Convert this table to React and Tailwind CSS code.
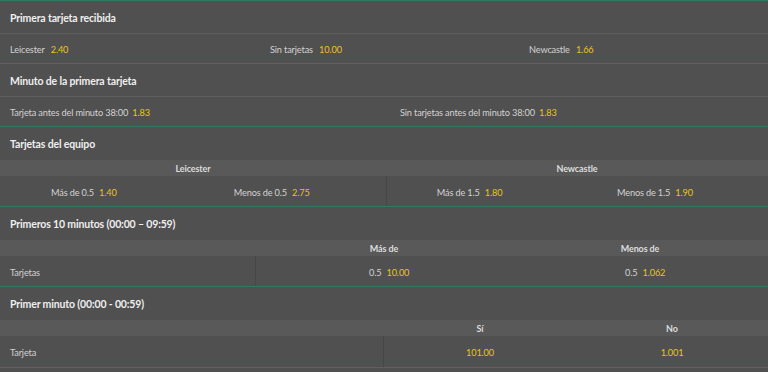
import React from 'react';

const font = "font-['Lato',_'Open_Sans',_sans-serif]";

const Odd = ({ children }) => <span className="text-[#e9c41f]">{children}</span>;

const Header = ({ title, tall }) => (
  <div className={`flex items-center px-[10px] pt-[2px] text-[10.5px] font-bold text-[#eeeeee] ${tall ? 'h-[33px]' : 'h-[32px]'}`}>
    {title}
  </div>
);

const Section = ({ children, last }) => (
  <div className={`border-t border-[#2f7a5c] ${last ? 'border-b' : ''}`}>{children}</div>
);

const SubHeader = ({ children }) => (
  <div className="flex h-[16px] items-center bg-[#595959] pt-[1px] text-[9px] font-bold tracking-[-0.1px] text-[#dcdcdc]">
    {children}
  </div>
);

const Pair = ({ label, odd }) => (
  <div className="flex flex-1 items-center gap-[5px]">
    <span className="flex-1 text-right">{label}</span>
    <span className="flex-1 text-left">
      <Odd>{odd}</Odd>
    </span>
  </div>
);

export default function App() {
  return (
    <div className={`w-[768px] h-[372px] bg-[#505050] text-[9.2px] leading-none tracking-[-0.15px] text-[#d2d2d2] ${font}`}>
      <Section>
        <Header title="Primera tarjeta recibida" />
        <div className="flex h-[30px] items-center border-t border-[#5f5f5f] pt-[3px]">
          <div className="w-[260px] pl-[10px]">
            Leicester <span className="ml-[4px]"><Odd>2.40</Odd></span>
          </div>
          <div className="w-[260px] pl-[10px]">
            Sin tarjetas <span className="ml-[4px]"><Odd>10.00</Odd></span>
          </div>
          <div className="flex-1 pl-[9px]">
            Newcastle <span className="ml-[4px]"><Odd>1.66</Odd></span>
          </div>
        </div>
      </Section>

      <Section>
        <Header title="Minuto de la primera tarjeta" />
        <div className="flex h-[30px] items-center border-t border-[#5f5f5f] pt-[3px]">
          <div className="w-[400px] pl-[10px]">
            Tarjeta antes del minuto 38:00 <span className="ml-[2px]"><Odd>1.83</Odd></span>
          </div>
          <div className="flex-1">
            Sin tarjetas antes del minuto 38:00 <span className="ml-[2px]"><Odd>1.83</Odd></span>
          </div>
        </div>
      </Section>

      <Section>
        <Header title="Tarjetas del equipo" tall />
        <SubHeader>
          <div className="w-[386px] text-center">Leicester</div>
          <div className="flex-1 text-center">Newcastle</div>
        </SubHeader>
        <div className="flex h-[30px] items-stretch">
          <div className="flex w-[386px] items-center pt-[3px]">
            <Pair label="Más de 0.5" odd="1.40" />
            <Pair label="Menos de 0.5" odd="2.75" />
          </div>
          <div className="flex flex-1 items-center border-l border-[#474747] pt-[3px]">
            <Pair label="Más de 1.5" odd="1.80" />
            <Pair label="Menos de 1.5" odd="1.90" />
          </div>
        </div>
      </Section>

      <Section>
        <Header title="Primeros 10 minutos (00:00 – 09:59)" tall />
        <SubHeader>
          <div className="w-[256px]" />
          <div className="flex-1 text-center">Más de</div>
          <div className="flex-1 text-center">Menos de</div>
        </SubHeader>
        <div className="flex h-[30px] items-stretch">
          <div className="flex w-[256px] items-center border-r border-[#474747] pl-[10px] pt-[3px]">Tarjetas</div>
          <div className="flex flex-1 items-center pt-[3px]">
            <Pair label="0.5" odd="10.00" />
          </div>
          <div className="flex flex-1 items-center pt-[3px]">
            <Pair label="0.5" odd="1.062" />
          </div>
        </div>
      </Section>

      <Section last>
        <Header title="Primer minuto (00:00 - 00:59)" tall />
        <SubHeader>
          <div className="w-[384px]" />
          <div className="flex-1 text-center">Sí</div>
          <div className="flex-1 text-center">No</div>
        </SubHeader>
        <div className="flex h-[31px] items-stretch">
          <div className="flex w-[384px] items-center border-r border-[#474747] pl-[10px] pt-[3px]">Tarjeta</div>
          <div className="flex flex-1 items-center justify-center pt-[3px]">
            <Odd>101.00</Odd>
          </div>
          <div className="flex flex-1 items-center justify-center pt-[3px]">
            <Odd>1.001</Odd>
          </div>
        </div>
      </Section>
    </div>
  );
}
